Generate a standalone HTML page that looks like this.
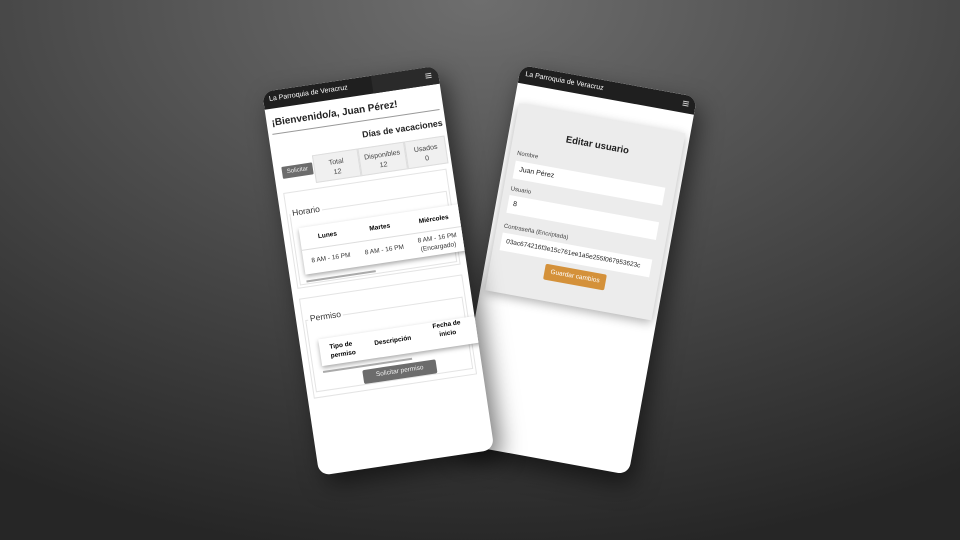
<!DOCTYPE html>
<html><head><meta charset="utf-8"><style>
*{margin:0;padding:0;box-sizing:border-box}
body{width:960px;height:540px;overflow:hidden;background:radial-gradient(ellipse 900px 560px at 50% 0%,#6e6e6e 0%,#4a4a4a 50%,#262626 100%);font-family:"Liberation Sans",sans-serif;position:relative}
.ph{position:absolute;background:#fff;border-radius:11px;overflow:hidden;transform-origin:0 0;box-shadow:6px 10px 24px rgba(0,0,0,.55)}
.hd{position:absolute;left:0;top:0;right:0;height:18px;background:#1f1f1f;color:#fff;font-size:7px;line-height:18px;padding-left:6px}
.hd .bg2{position:absolute;left:110px;right:0;top:0;bottom:0;background:#2a2a2a}
.hd span{position:relative}
.hb{position:absolute;right:7px;top:6px;width:6px;height:5px;border-top:1px solid #ccc;border-bottom:1px solid #ccc}
.hb:after{content:"";position:absolute;left:0;right:0;top:1px;border-top:1px solid #ccc}
.a{position:absolute}
.box{position:absolute;background:#f0f0f0;border:1px solid #ddd;text-align:center;font-size:7px;color:#444;line-height:10px;padding-top:5px}
.card{position:absolute;background:#fff;box-shadow:0 2px 5px rgba(0,0,0,.35)}
.inp{position:absolute;left:12px;width:152px;height:18px;background:#fff;font-size:7px;line-height:18px;padding-left:5px;color:#222;white-space:nowrap;overflow:hidden}
.lbl{position:absolute;left:12px;font-size:6px;color:#444}
</style></head><body>

<div class="ph" style="left:521px;top:65px;width:179px;height:384px;transform:rotate(10.3deg)">
 <div class="hd"><span>La Parroquia de Veracruz</span><div class="hb"></div></div>
 <div class="a" style="left:5px;top:38px;width:169px;height:190px;background:#ececec;box-shadow:0 3px 10px rgba(0,0,0,.3)"></div>
 <div class="a" style="left:0;width:179px;top:60px;text-align:center;font-size:9.5px;font-weight:bold;color:#222">Editar usuario</div>
 <div class="lbl" style="top:85px">Nombre</div>
 <div class="inp" style="top:95px">Juan Pérez</div>
 <div class="lbl" style="top:121px">Usuario</div>
 <div class="inp" style="top:130px">8</div>
 <div class="lbl" style="top:159px">Contraseña (Encriptada)</div>
 <div class="inp" style="top:168px;font-size:6.5px">03ac674216f3e15c761ee1a5e255f067953623c</div>
 <div class="a" style="left:60px;top:191px;width:62px;height:16px;background:#d4913a;border-radius:2px;color:#fff;font-size:6.5px;line-height:16px;text-align:center">Guardar cambios</div>
</div>

<div class="ph" style="left:262px;top:92px;width:177px;height:388px;transform:rotate(-8.5deg)">
 <div class="hd"><div class="bg2"></div><span>La Parroquia de Veracruz</span><div class="hb"></div></div>
 <div class="a" style="left:5px;top:27px;font-size:10px;font-weight:bold;color:#222">¡Bienvenido/a, Juan Pérez!</div>
 <div class="a" style="left:4px;right:4px;top:43px;border-top:1px solid #999"></div>
 <div class="a" style="right:3px;top:52px;font-size:8.8px;font-weight:bold;color:#222">Días de vacaciones</div>
 <div class="a" style="left:8px;top:77px;width:31px;height:12px;background:#6c6c6c;color:#eee;font-size:6px;line-height:12px;text-align:center;border-radius:1px">Solicitar</div>
 <div class="box" style="left:40px;top:70px;width:46px;height:28px">Total<br>12</div>
 <div class="box" style="left:86px;top:70px;width:47px;height:28px">Disponibles<br>12</div>
 <div class="box" style="left:133px;top:70px;width:41px;height:28px">Usados<br>0</div>

 <div class="a" style="left:6px;right:6px;top:103px;height:97px;border:1px solid #e4e4e4"></div>
 <div class="a" style="left:9px;right:9px;top:125px;height:72px;border:1px solid #e4e4e4"></div>
 <div class="a" style="left:10px;top:119px;font-size:8.5px;color:#333;background:#fff;padding:0 2px">Horario</div>
 <div class="card" style="left:16px;top:140px;width:166px;height:47px">
  <div class="a" style="left:0;right:0;top:22px;border-top:1px solid #ddd"></div>
  <div class="a" style="left:18px;top:8px;font-size:6.5px;font-weight:bold">Lunes</div>
  <div class="a" style="left:70px;top:8px;font-size:6.5px;font-weight:bold">Martes</div>
  <div class="a" style="left:120px;top:8px;font-size:6.5px;font-weight:bold">Miércoles</div>
  <div class="a" style="left:8px;top:31px;font-size:6.5px;color:#333">8 AM - 16 PM</div>
  <div class="a" style="left:62px;top:31px;font-size:6.5px;color:#333">8 AM - 16 PM</div>
  <div class="a" style="left:116px;top:26px;font-size:6.5px;color:#333;text-align:center;line-height:9px">8 AM - 16 PM<br>(Encargado)</div>
 </div>
 <div class="a" style="left:16px;top:193px;width:70px;height:2px;background:#aaa"></div>

 <div class="a" style="left:6px;right:6px;top:210px;height:101px;border:1px solid #e4e4e4"></div>
 <div class="a" style="left:9px;right:9px;top:232px;height:73px;border:1px solid #e4e4e4"></div>
 <div class="a" style="left:12px;top:226px;font-size:8.5px;color:#333;background:#fff;padding:0 2px">Permiso</div>
 <div class="card" style="left:19px;top:253px;width:166px;height:27px">
  <div class="a" style="left:10px;top:5px;font-size:6.5px;font-weight:bold;line-height:9px">Tipo de<br>permiso</div>
  <div class="a" style="left:55px;top:9px;font-size:6.5px;font-weight:bold">Descripción</div>
  <div class="a" style="left:115px;top:0px;font-size:6.5px;font-weight:bold;line-height:9px;text-align:center">Fecha de<br>inicio</div>
 </div>
 <div class="a" style="left:19px;top:285px;width:90px;height:2px;background:#aaa"></div>
 <div class="a" style="left:58px;top:290px;width:74px;height:14px;background:#6c6c6c;color:#eee;font-size:6.5px;line-height:14px;text-align:center;border-radius:2px">Solicitar permiso</div>
</div>
</body></html>
